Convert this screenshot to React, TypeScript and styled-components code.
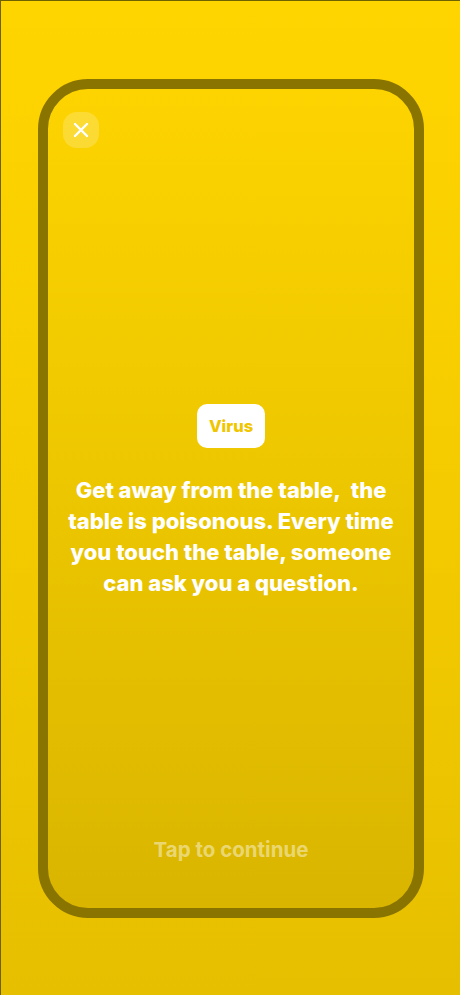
import styled, { createGlobalStyle } from 'styled-components';

const GlobalStyle = createGlobalStyle`
  html, body {
    margin: 0;
    padding: 0;
  }
  body {
    font-family: Inter, "Open Sans", sans-serif;
  }
`;

export const App = () => {
  return (
    <Screen>
      <GlobalStyle />
      <CardFrame>
        <TopBar>
          <CloseButton aria-label="Close">
            <svg width="18" height="18" viewBox="0 0 18 18" fill="none">
              <path d="M3 3L15 15M15 3L3 15" stroke="#fff" strokeWidth="2.4" strokeLinecap="round" />
            </svg>
          </CloseButton>
        </TopBar>
        <Content>
          <Badge>Virus</Badge>
          <Prompt>
            Get away from the table,&nbsp; the table is poisonous. Every time you touch the table,
            someone can ask you a question.
          </Prompt>
        </Content>
        <ContinueHint>Tap to continue</ContinueHint>
      </CardFrame>
    </Screen>
  );
};

const Screen = styled.div`
  box-sizing: border-box;
  width: 460px;
  height: 995px;
  padding: 78px 36px 78px 37px;
  background: linear-gradient(180deg, #ffd500 0%, #f3ca00 55%, #e6bf00 100%);
  border-top: 1px solid #6e6200;
  border-left: 1px solid #6e6200;
`;

const CardFrame = styled.div`
  box-sizing: border-box;
  height: 839px;
  display: flex;
  flex-direction: column;
  border: 10px solid #8a7400;
  border-radius: 50px;
  background: linear-gradient(180deg, #fdd400 0%, #ecc600 50%, #d9b500 100%);
  padding: 23px 15px 46px;
`;

const TopBar = styled.div`
  display: flex;
`;

const CloseButton = styled.button`
  width: 36px;
  height: 36px;
  border: none;
  border-radius: 14px;
  background: rgba(255, 255, 255, 0.2);
  display: flex;
  align-items: center;
  justify-content: center;
  padding: 0;
  cursor: pointer;
`;

const Content = styled.div`
  flex: 1;
  display: flex;
  flex-direction: column;
  align-items: center;
  justify-content: center;
  gap: 27px;
  padding-top: 18px;
`;

const Badge = styled.div`
  background: #fff;
  color: #f0c600;
  font-weight: 800;
  font-size: 16.5px;
  height: 44px;
  padding: 0 12px;
  border-radius: 10px;
  display: flex;
  align-items: center;
`;

const Prompt = styled.p`
  margin: 0;
  color: #fff;
  font-weight: 800;
  font-size: 22px;
  line-height: 31px;
  text-align: center;
  padding: 0 4px;
`;

const ContinueHint = styled.div`
  color: rgba(255, 255, 255, 0.45);
  font-weight: 700;
  font-size: 20.5px;
  text-align: center;
`;

export default App;
